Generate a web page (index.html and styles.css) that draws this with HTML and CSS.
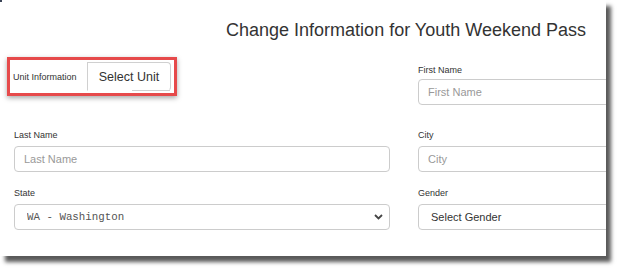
FILE: index.html
```html
<!DOCTYPE html>
<html lang="en">
<head>
  <meta charset="UTF-8">
  <meta name="viewport" content="width=device-width, initial-scale=1.0">
  <title>Change Information</title>
  <link rel="stylesheet" href="styles.css">
</head>
<body>
  <div class="shot">
    <div class="page">
      <h1>Change Information for Youth Weekend Pass</h1>

      <div class="form-row top">
        <div class="col">
          <div class="unit-box">
            <span class="unit-label">Unit Information</span>
            <button type="button" class="unit-btn">Select Unit</button>
          </div>
        </div>
        <div class="col first">
          <label for="firstName">First Name</label>
          <input type="text" id="firstName" placeholder="First Name">
        </div>
      </div>

      <div class="form-row">
        <div class="col">
          <label for="lastName">Last Name</label>
          <input type="text" id="lastName" placeholder="Last Name">
        </div>
        <div class="col">
          <label for="city">City</label>
          <input type="text" id="city" placeholder="City">
        </div>
      </div>

      <div class="form-row">
        <div class="col">
          <label for="state">State</label>
          <div class="select-wrap">
            <select id="state" class="mono">
              <option>WA - Washington</option>
            </select>
            <svg class="chevron" width="9" height="6" viewBox="0 0 9 6"><polyline points="1,1 4.5,4.5 8,1" fill="none" stroke="#444" stroke-width="1.8"/></svg>
          </div>
        </div>
        <div class="col">
          <label for="gender">Gender</label>
          <div class="select-wrap">
            <select id="gender">
              <option>Select Gender</option>
            </select>
            <svg class="chevron" width="9" height="6" viewBox="0 0 9 6"><polyline points="1,1 4.5,4.5 8,1" fill="none" stroke="#444" stroke-width="1.8"/></svg>
          </div>
        </div>
      </div>
    </div>
  </div>
</body>
</html>
```

FILE: styles.css
```css
html, body {
  min-height: 272px;
}
body {
  margin: 0;
  background: #fff;
  font-family: "Liberation Sans", Arial, sans-serif;
}
.shot {
  position: relative;
  width: 606px;
  height: 256px;
  overflow: hidden;
  background: #fff;
  box-shadow: 5px 6px 4px rgba(0, 0, 0, 0.65);
}
.shot::before {
  content: "";
  position: absolute;
  left: 0;
  top: 0;
  width: 2px;
  height: 2px;
  background: #3a4456;
}
.page {
  width: 812px;
  box-sizing: border-box;
  padding: 19px 18px 0 14px;
}
h1 {
  margin: 0 0 16px;
  padding-left: 4px;
  font-size: 18px;
  line-height: 22px;
  font-weight: normal;
  color: #333;
  text-align: center;
}
.form-row {
  display: flex;
  gap: 28px;
  margin-bottom: 15px;
}
.form-row.top {
  margin-bottom: 24px;
}
.col {
  width: 376px;
}
.col.first {
  padding-top: 7px;
}
.col.first label {
  margin-bottom: 3px;
}
label {
  display: block;
  font-size: 9px;
  line-height: 12px;
  margin-bottom: 5px;
  color: #333;
}
input, select {
  display: block;
  width: 100%;
  height: 26px;
  box-sizing: border-box;
  margin: 0;
  border: 1px solid #ccc;
  border-radius: 4px;
  background: #fff;
  font-family: "Liberation Sans", Arial, sans-serif;
  font-size: 11px;
  color: #333;
  outline: none;
}
input {
  padding: 0 9px;
}
input::placeholder {
  color: #999;
}
select {
  padding: 0 12px;
  appearance: none;
  -webkit-appearance: none;
}
select.mono {
  font-family: "Liberation Mono", "Courier New", monospace;
  font-size: 10.8px;
  color: #555;
}
.select-wrap {
  position: relative;
}
.chevron {
  position: absolute;
  right: 7px;
  top: 10px;
}
.unit-box {
  display: inline-flex;
  align-items: center;
  margin-left: -7px;
  width: 170px;
  height: 39px;
  box-sizing: border-box;
  padding: 2px 3px 2px 3px;
  border: 3px solid #e64a4b;
  background: #fff;
  box-shadow: 0 2px 5px rgba(0, 0, 0, 0.35);
}
.unit-label {
  flex: 1;
  font-size: 9px;
  color: #333;
}
.unit-btn {
  position: relative;
  width: 84px;
  height: 29px;
  padding: 0;
  border: 1px solid #d0d0d0;
  border-bottom-color: transparent;
  border-radius: 0 4px 4px 0;
  background: #fff;
  font-family: "Liberation Sans", Arial, sans-serif;
  font-size: 12.5px;
  color: #333;
}
.unit-btn::after {
  content: "";
  position: absolute;
  left: 44px;
  right: 0;
  bottom: -1px;
  height: 1px;
  background: #d0d0d0;
}
```
